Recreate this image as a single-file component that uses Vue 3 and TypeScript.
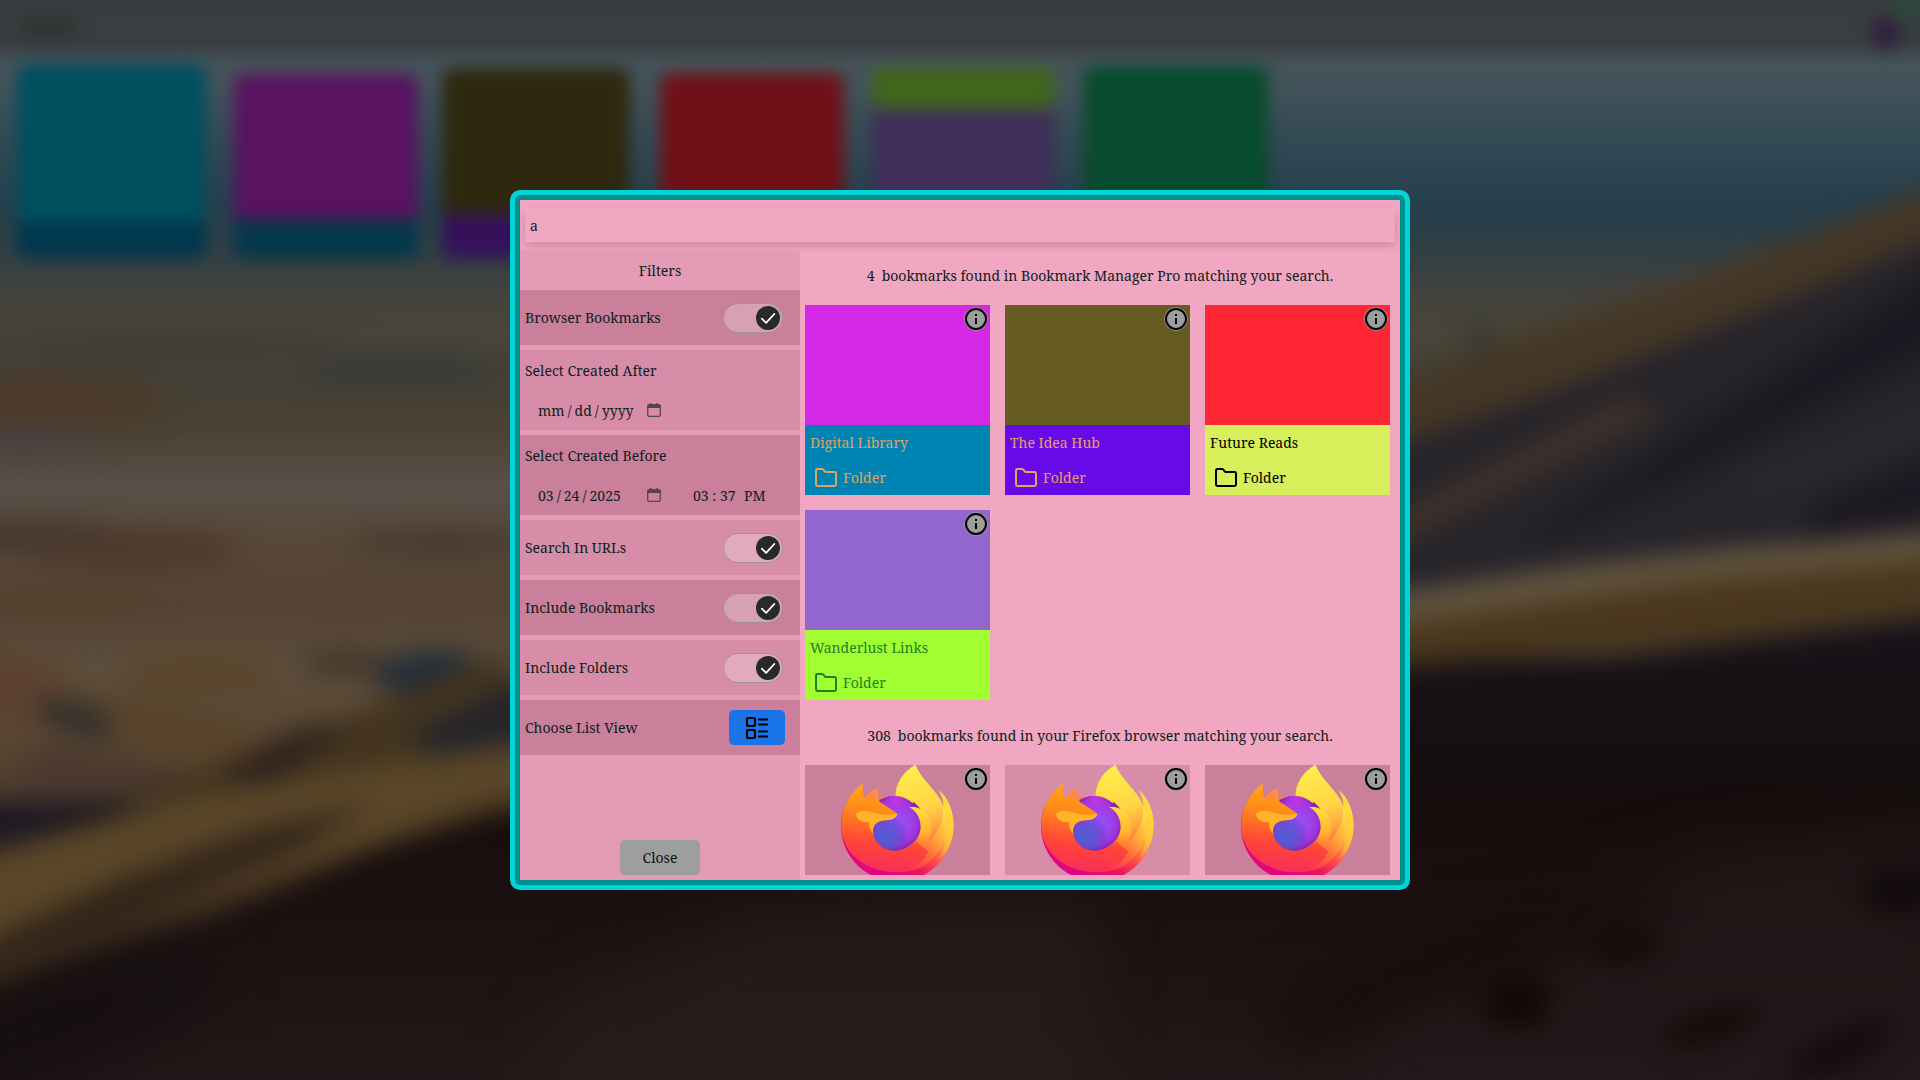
<script setup lang="ts">
interface FilterRow { label: string; kind: 'toggle' | 'after' | 'before' | 'view' }
interface Folder { title: string; top: string; bottom: string; ink: string }

const filters: FilterRow[] = [
  { label: 'Browser Bookmarks', kind: 'toggle' },
  { label: 'Select Created After', kind: 'after' },
  { label: 'Select Created Before', kind: 'before' },
  { label: 'Search In URLs', kind: 'toggle' },
  { label: 'Include Bookmarks', kind: 'toggle' },
  { label: 'Include Folders', kind: 'toggle' },
  { label: 'Choose List View', kind: 'view' },
]

const folders: Folder[] = [
  { title: 'Digital Library', top: '#d429e4', bottom: '#0084b4', ink: '#e0a060' },
  { title: 'The Idea Hub', top: '#665b20', bottom: '#660be8', ink: '#e8a05c' },
  { title: 'Future Reads', top: '#ff2635', bottom: '#d6ef5b', ink: '#000000' },
  { title: 'Wanderlust Links', top: '#9266cc', bottom: '#a1ff31', ink: '#1c8024' },
]

const browserCards = [0, 1, 2]
</script>

<template>
  <div class="page">
    <svg class="backdrop" viewBox="0 0 1920 1080" preserveAspectRatio="none">
      <defs>
        <linearGradient id="sky" x1="0" y1="0" x2="0" y2="1">
          <stop offset="0" stop-color="#383d3f" />
          <stop offset=".04" stop-color="#393f40" />
          <stop offset=".06" stop-color="#45535a" />
          <stop offset=".08" stop-color="#43535b" />
          <stop offset=".13" stop-color="#324a54" />
          <stop offset=".19" stop-color="#263f4d" />
          <stop offset=".23" stop-color="#303f44" />
          <stop offset=".27" stop-color="#43423e" />
          <stop offset=".31" stop-color="#484639" />
          <stop offset=".345" stop-color="#434037" />
          <stop offset=".40" stop-color="#4b4233" />
          <stop offset=".45" stop-color="#58504a" />
          <stop offset=".50" stop-color="#584838" />
          <stop offset=".56" stop-color="#544333" />
          <stop offset=".62" stop-color="#5d4e3c" />
          <stop offset=".70" stop-color="#58452f" />
        </linearGradient>
        <linearGradient id="ground" x1="0" y1="0" x2="0" y2="1">
          <stop offset="0" stop-color="#17131a" />
          <stop offset=".4" stop-color="#160d0c" />
          <stop offset=".7" stop-color="#1c1312" />
          <stop offset="1" stop-color="#241a1b" />
        </linearGradient>
        <filter id="soft" x="-10%" y="-10%" width="120%" height="120%" color-interpolation-filters="sRGB"><feGaussianBlur stdDeviation="13" /></filter>
        <filter id="haze" x="-10%" y="-10%" width="120%" height="120%" color-interpolation-filters="sRGB"><feGaussianBlur stdDeviation="28" /></filter>
        <filter id="tile" x="-10%" y="-10%" width="120%" height="120%" color-interpolation-filters="sRGB"><feGaussianBlur stdDeviation="8" /></filter>
      </defs>
      <rect width="1920" height="1080" fill="url(#sky)" />
      <g filter="url(#soft)">
        <ellipse cx="170" cy="345" rx="190" ry="14" fill="#3f3c35" />
        <ellipse cx="400" cy="372" rx="100" ry="14" fill="#393a37" />
        <ellipse cx="40" cy="400" rx="130" ry="26" fill="#4c3a29" />
        <ellipse cx="20" cy="440" rx="80" ry="12" fill="#484244" />
        <ellipse cx="30" cy="535" rx="100" ry="12" fill="#40332d" />
        <ellipse cx="440" cy="543" rx="90" ry="12" fill="#433a30" />
        <ellipse cx="130" cy="550" rx="110" ry="20" fill="#4b3a2d" />
        <ellipse cx="70" cy="602" rx="90" ry="10" fill="#54402c" />
        <ellipse cx="0" cy="690" rx="70" ry="40" fill="#5d4231" />
        <ellipse cx="200" cy="675" rx="80" ry="20" fill="#5b452c" />
        <ellipse cx="170" cy="730" rx="100" ry="22" transform="rotate(14 170 730)" fill="#59432b" />
        <ellipse cx="345" cy="663" rx="45" ry="14" fill="#46362b" />
        <ellipse cx="425" cy="671" rx="52" ry="20" transform="rotate(-8 425 671)" fill="#222d38" />
        <ellipse cx="75" cy="718" rx="42" ry="16" transform="rotate(18 75 718)" fill="#332f2b" />
        <path d="M50 745 L190 770 L150 795 L-20 790Z" fill="#4b3930" />
        <path d="M-30 805 L120 795 L220 765 L340 720 L510 650 V780 L0 860 L-30 860Z" fill="#43341f" />
        <path d="M-30 800 L100 800 L170 812 L0 850 L-30 855Z" fill="#1d1822" />
        <path d="M210 778 L300 728 L350 725 L270 785Z" fill="#2e221d" />
        <path d="M410 735 L540 670 V750 L430 755Z" fill="#252429" />
        <path d="M-40 860 L200 795 L350 770 L540 740 V820 L-40 1000Z" fill="#5a4628" />
        <path d="M-40 955 L120 878 L250 830 L370 805 L300 850 L150 915 L-40 975Z" fill="#34261a" />
        <path d="M-30 985 L200 900 L500 798 L540 830 L-30 1020Z" fill="#44321f" />
        <path d="M-40 1008 L190 922 L380 848 L540 800 V840 H1380 V662 L1620 655 L1960 612 V1120 H-40Z" fill="url(#ground)" />
        <path d="M1380 400 L1508 345 L1606 312 L1688 283 L1810 239 L1960 180 V560 L1380 630Z" fill="#26242a" />
        <path d="M1380 392 L1508 340 L1606 307 L1688 280 L1810 235 L1960 176 V225 L1810 289 L1688 338 L1570 385 L1380 450Z" fill="#463726" />
        <path d="M1380 520 L1630 395 L1660 415 L1380 555Z" fill="#3f312a" />
        <path d="M1570 510 L1820 345 L1960 250 V340 L1700 470 L1520 550Z" fill="#1c1922" />
        <path d="M1740 470 L1960 380 V460 L1740 510Z" fill="#29262e" />
        <path d="M1820 500 L1960 440 V510 L1800 545Z" fill="#1c1922" />
        <path d="M1380 606 L1566 574 L1729 556 L1960 535 V605 L1700 640 L1380 668Z" fill="#4a371d" />
        <path d="M1380 595 L1566 567 L1729 549 L1960 530 V557 L1700 580 L1380 625Z" fill="#645540" />
        <ellipse cx="1480" cy="338" rx="9" ry="18" fill="#33332f" />
      </g>
      <g filter="url(#haze)">
        <path d="M1440 960 L1660 860 L1960 820 V1120 H1300Z" fill="#241a1b" opacity=".7" />
        <path d="M500 1120 L560 1000 L760 910 L1100 900 L1100 1120Z" fill="#261d1b" opacity=".8" />
        <ellipse cx="30" cy="1030" rx="200" ry="60" transform="rotate(-20 30 1030)" fill="#170f11" />
        <path d="M1260 1010 L1440 940 L1700 870 L1640 920 L1300 1050Z" fill="#170c0b" />
      </g>
      <g filter="url(#soft)">
        <ellipse cx="1517" cy="1002" rx="34" ry="28" fill="#130907" />
        <ellipse cx="1625" cy="945" rx="34" ry="18" fill="#140b0b" />
        <ellipse cx="1712" cy="1025" rx="52" ry="14" transform="rotate(-18 1712 1025)" fill="#130a0a" />
        <ellipse cx="1900" cy="890" rx="36" ry="24" fill="#120a0b" />
        <ellipse cx="1840" cy="1050" rx="60" ry="18" transform="rotate(-25 1840 1050)" fill="#150c0d" />
      </g>
      <g filter="url(#tile)">
        <rect x="18" y="16" width="58" height="22" rx="8" fill="#303434" />
        <rect x="17" y="64" width="189" height="194" rx="10" fill="#004f60" />
        <path d="M17 222H206V250Q206 258 198 258H25Q17 258 17 250Z" fill="#00384c" />
        <rect x="234" y="74" width="184" height="184" rx="10" fill="#5a1261" />
        <path d="M234 219H418V250Q418 258 410 258H242Q234 258 234 250Z" fill="#04384a" />
        <rect x="442" y="68" width="188" height="190" rx="10" fill="#2e280f" />
        <path d="M442 215H630V258H450Q442 258 442 250Z" fill="#35115c" />
        <rect x="660" y="73" width="184" height="186" rx="10" fill="#701017" />
        <rect x="872" y="68" width="182" height="190" rx="8" fill="#402e59" />
        <rect x="872" y="68" width="182" height="41" rx="8" fill="#3f6719" />
        <rect x="1084" y="66" width="184" height="193" rx="10" fill="#074b2e" />
        <circle cx="1886" cy="33" r="15" fill="#30203d" />
        <circle cx="1906" cy="4" r="13" fill="#2a4a3b" />
      </g>
    </svg>

    <!-- Gradients shared by every browser logo -->
    <svg class="defs" width="0" height="0">
      <defs>
        <linearGradient id="ffBody" gradientUnits="userSpaceOnUse" x1="440" y1="880" x2="200" y2="1120">
          <stop offset=".1" stop-color="#ffe94a" />
          <stop offset=".32" stop-color="#ffb13a" />
          <stop offset=".5" stop-color="#ff6a3a" />
          <stop offset=".68" stop-color="#ff3647" />
          <stop offset=".95" stop-color="#e31587" />
        </linearGradient>
        <linearGradient id="ffRim" gradientUnits="userSpaceOnUse" x1="480" y1="920" x2="300" y2="1150">
          <stop offset="0" stop-color="#ffef4a" />
          <stop offset=".35" stop-color="#ffc03c" />
          <stop offset=".62" stop-color="#ff4a4a" />
          <stop offset=".8" stop-color="#ec1360" />
          <stop offset="1" stop-color="#e2077f" />
        </linearGradient>
        <linearGradient id="ffFace" gradientUnits="userSpaceOnUse" x1="260" y1="885" x2="225" y2="1150">
          <stop offset="0" stop-color="#ffa616" />
          <stop offset=".3" stop-color="#ff8a1a" />
          <stop offset=".65" stop-color="#ff4538" />
          <stop offset="1" stop-color="#f72a5e" />
        </linearGradient>
        <linearGradient id="ffFlame" gradientUnits="userSpaceOnUse" x1="360" y1="830" x2="420" y2="1060">
          <stop offset="0" stop-color="#fff04a" />
          <stop offset=".55" stop-color="#ffd444" />
          <stop offset=".8" stop-color="#ffa63f" />
          <stop offset="1" stop-color="#ff6a45" />
        </linearGradient>
        <linearGradient id="ffSwirl" gradientUnits="userSpaceOnUse" x1="380" y1="950" x2="385" y2="1100">
          <stop offset="0" stop-color="#ffe043" />
          <stop offset=".5" stop-color="#ffb52e" />
          <stop offset="1" stop-color="#ff5235" />
        </linearGradient>
        <radialGradient id="ffGlobe" gradientUnits="userSpaceOnUse" cx="318" cy="1000" r="86">
          <stop offset="0" stop-color="#8f54ff" />
          <stop offset=".45" stop-color="#9a46ee" />
          <stop offset=".75" stop-color="#a135dc" />
          <stop offset="1" stop-color="#7418a8" />
        </radialGradient>
        <radialGradient id="ffTop" gradientUnits="userSpaceOnUse" cx="318" cy="925" r="60">
          <stop offset="0" stop-color="#c436e4" />
          <stop offset="1" stop-color="#b038e8" stop-opacity="0" />
        </radialGradient>
        <radialGradient id="ffBlue" gradientUnits="userSpaceOnUse" cx="285" cy="1042" r="70">
          <stop offset="0" stop-color="#4d5fd0" />
          <stop offset=".5" stop-color="#5a54d0" stop-opacity=".8" />
          <stop offset="1" stop-color="#5a30b0" stop-opacity="0" />
        </radialGradient>
      </defs>
    </svg>

    <div class="overlay">
      <section class="modal">
        <div class="inner">
          <div class="search">a</div>
          <div class="body">
            <aside class="filters">
              <h2 class="filters-title">Filters</h2>
              <div class="rows">
                <div v-for="f in filters" :key="f.label" class="row" :class="f.kind">
                  <span class="label">{{ f.label }}</span>
                  <span v-if="f.kind === 'toggle'" class="switch">
                    <span class="knob">
                      <svg width="24" height="24" viewBox="0 0 24 24"><path d="M5.8 12.6l4.3 4.2 8.3-9" fill="none" stroke="#fff" stroke-width="1.7" stroke-linecap="round" stroke-linejoin="round" /></svg>
                    </span>
                  </span>
                  <div v-else-if="f.kind !== 'view'" class="date">
                    <span class="day">{{ f.kind === 'after' ? 'mm / dd / yyyy' : '03 / 24 / 2025' }}</span>
                    <svg class="cal" width="14" height="14" viewBox="0 0 14 14">
                      <path d="M2.3 1.6h9.4a1.6 1.6 0 0 1 1.6 1.6v8.5a1.6 1.6 0 0 1-1.6 1.6H2.3a1.6 1.6 0 0 1-1.6-1.6V3.2a1.6 1.6 0 0 1 1.6-1.6z" fill="none" stroke="#544940" stroke-width="1.3" />
                      <path d="M.8 2h12.4v3H.8zM3 0h1.5v2H3zM9.5 0H11v2H9.500z" fill="#544940" />
                    </svg>
                    <template v-if="f.kind === 'before'">
                      <span class="time">03 : 37</span><span class="half">PM</span>
                    </template>
                  </div>
                  <button v-else class="view-btn">
                    <svg width="24" height="24" viewBox="0 0 24 24" fill="none" stroke="#000" stroke-width="2.2" stroke-linecap="round">
                      <rect x="2" y="2" width="8" height="8" rx="1.2" /><rect x="2" y="14" width="8" height="8" rx="1.2" />
                      <path d="M14 3.500h8M14 8.500h8M14 15.500h8M14 20.500h8" />
                    </svg>
                  </button>
                </div>
              </div>
              <button class="close">Close</button>
            </aside>

            <main class="results">
              <p class="found first"><span>4</span><span>bookmarks found in Bookmark Manager Pro matching your search.</span></p>
              <div class="grid">
                <article v-for="c in folders" :key="c.title" class="card" :style="{ background: c.top, color: c.ink }">
                  <div class="cover"></div>
                  <div class="foot" :style="{ background: c.bottom }">
                    <div class="name">{{ c.title }}</div>
                    <div class="type">
                      <svg width="24" height="24" viewBox="0 0 24 24"><path d="M2 18.6V4.4Q2 3 3.4 3H8q.8 0 1.300.6L11 5.600q.4.500 1.100.5H20.600Q22 6.100 22 7.500v11.100Q22 20 20.600 20H3.400Q2 20 2 18.600z" fill="none" stroke="currentColor" stroke-width="2" stroke-linejoin="round" /></svg>
                      <span>Folder</span>
                    </div>
                  </div>
                  <svg class="info" width="24" height="24" viewBox="0 0 24 24"><circle cx="12" cy="12" r="11.7" fill="#9e9e9e" /><circle cx="12" cy="12" r="10" fill="none" stroke="#000" stroke-width="2" /><path d="M11 11h2v6h-2zM11 7h2v2h-2z" /></svg>
                </article>
              </div>
              <p class="found second"><span>308</span><span>bookmarks found in your Firefox browser matching your search.</span></p>
              <div class="grid">
                <article v-for="n in browserCards" :key="n" class="card browser" :class="{ pale: n === 1 }">
                  <svg class="logo" width="185" height="120" viewBox="45 825 555 360">
                    <path d="M218 881C190 905 153 945 153 1008C153 1100 228 1174 322 1174C418 1174 491 1098 491 1005C491 960 472 921 446 900C456 917 461 932 461 952C440 908 397 872 376 825C338 848 316 880 317 925L222 925Z" fill="url(#ffRim)" />
                    <path d="M317 920C316 880 338 848 376 825C393 872 440 900 461 950C478 1010 462 1080 412 1120C385 1142 352 1147 320 1147C240 1147 170 1100 154 1020L180 930L222 921Z" fill="url(#ffBody)" />
                    <path d="M317 925C316 880 338 848 376 825C390 865 440 900 459 945C462 990 449 1022 418 1054L390 960Z" fill="url(#ffFlame)" />
                    <path d="M446 900C472 921 491 960 491 1005C490 1045 475 1080 450 1105C471 1060 475 1010 463 952C463 935 459 917 446 900Z" fill="#ffcf38" opacity=".45" />
                    <circle cx="312" cy="1000" r="82" fill="url(#ffGlobe)" />
                    <circle cx="312" cy="1000" r="82" fill="url(#ffTop)" />
                    <circle cx="312" cy="1000" r="82" fill="url(#ffBlue)" />
                    <path d="M370 935Q380 942 393 959L360 956Z" fill="#8a1fb8" />
                    <path d="M357 952C372 949 386 952 396 960C415 974 424 996 424 1020C424 1065 385 1107 333 1107C355 1095 392 1060 392 1010C391 982 377 961 357 952Z" fill="url(#ffSwirl)" />
                    <path d="M222 925L242 904Q253 896 265 893Q261 914 269 936L240 940Z" fill="#ff8a48" />
                    <path d="M218 881Q217 905 222 924C252 919 278 940 323 972C313 990 300 990 285 991C265 992 249 1005 248 1020C250 1055 278 1083 318 1083C342 1083 365 1072 378 1054L415 1085C390 1128 350 1144 312 1146C225 1146 155 1084 154 1012C153 950 185 904 218 881Z" fill="url(#ffFace)" />
                    <path d="M198 972C210 956 238 963 260 970C290 978 300 973 323 972C313 990 300 990 285 991C262 992 245 1005 250 1031C239 1021 236 1010 237 997C217 998 201 990 198 972Z" fill="#ffb527" />
                  </svg>
                  <svg class="info" width="24" height="24" viewBox="0 0 24 24"><circle cx="12" cy="12" r="11.7" fill="#9e9e9e" /><circle cx="12" cy="12" r="10" fill="none" stroke="#000" stroke-width="2" /><path d="M11 11h2v6h-2zM11 7h2v2h-2z" /></svg>
                </article>
              </div>
            </main>
          </div>
        </div>
      </section>
    </div>
  </div>
</template>

<style>
html, body { margin: 0; overflow: hidden; background: #1a1212; }
</style>

<style scoped>
* { box-sizing: border-box; }
.page {
  position: relative;
  width: 1920px;
  height: 1080px;
  overflow: hidden;
  font-family: "Noto Serif Condensed", "Noto Serif", "DejaVu Serif Condensed", "DejaVu Serif", serif;
  font-size: 14px;
  line-height: 20px;
  color: #0c211c;
}
.backdrop, .defs { position: absolute; left: 0; top: 0; }
.backdrop { width: 1920px; height: 1080px; }
.overlay { position: absolute; inset: 0; display: flex; align-items: center; justify-content: center; }
.modal { width: 900px; height: 700px; background: #009090; border: 5px solid #00d6d6; border-radius: 10px; }
.inner { width: 880px; height: 680px; margin: 5px; background: #f1a7c1; padding-top: 8px; overflow: hidden; }
.search { height: 34px; margin: 0 5px; padding: 8px 5px 6px; background: #f1a7c1; box-shadow: 0 4px 8px rgba(0, 0, 0, .1), 0 3px 12px rgba(0, 0, 0, .07); }
.body { display: flex; height: 638px; padding-top: 8px; }
.filters { width: 280px; height: 630px; background: #e49bb5; border-top-right-radius: 5px; display: flex; flex-direction: column; align-items: center; padding-bottom: 5px; position: relative; }
.filters-title { margin: 0; height: 40px; line-height: 20px; padding-top: 11px; font-size: inherit; font-weight: 400; }
.rows { width: 100%; display: flex; flex-direction: column; gap: 5px; }
.row { height: 55px; padding: 0 17px 0 5px; display: flex; align-items: center; justify-content: space-between; background: #ca7f9a; }
.row:nth-child(even) { background: #d78da8; }
.row.view { padding-right: 15px; }
.row.after, .row.before { height: 80px; flex-direction: column; align-items: flex-start; justify-content: flex-start; gap: 20px; padding-top: 11px; }
.switch { width: 60px; height: 30px; border: 1px solid #9e9498; border-radius: 15px; background: rgba(255, 255, 255, .26); display: flex; justify-content: flex-end; align-items: center; padding-right: 2px; }
.knob { width: 24px; height: 24px; border-radius: 50%; background: #292929; }
.knob svg { display: block; }
.date { display: flex; height: 20px; padding-left: 13px; white-space: nowrap; }
.day { width: 109px; word-spacing: -.6px; }
.cal { margin-top: 2px; }
.time { width: 51px; margin-left: 32px; }
.view-btn { width: 56px; height: 35px; padding: 0; border: 0; border-radius: 5px; background: #1a73e8; display: flex; align-items: center; justify-content: center; }
.close { width: 80px; height: 35px; margin-top: auto; border: 0; border-radius: 5px; background: #9e9e9e; color: #0c1412; font: inherit; padding: 0; }
.results { width: 600px; height: 625px; overflow: hidden; padding: 0 10px 0 5px; }
.found { margin: 0; padding-left: 5px; display: flex; justify-content: center; gap: 7px; white-space: nowrap; }
.found.first { height: 55px; padding-top: 16px; }
.found.second { height: 65px; padding-top: 26px; }
.found span { display: block; }
.grid { display: grid; grid-template-columns: repeat(3, 185px); gap: 15px; }
.card { position: relative; height: 190px; }
.cover { height: 120px; }
.foot { height: 70px; padding: 8px 5px 0; }
.type { display: flex; align-items: center; gap: 5px; margin-top: 12px; padding-left: 4px; height: 26px; }
.info { position: absolute; top: 2px; right: 2px; }
.browser { background: #ca7f9a; }
.browser.pale { background: #d78da8; }
.logo { display: block; }
</style>
